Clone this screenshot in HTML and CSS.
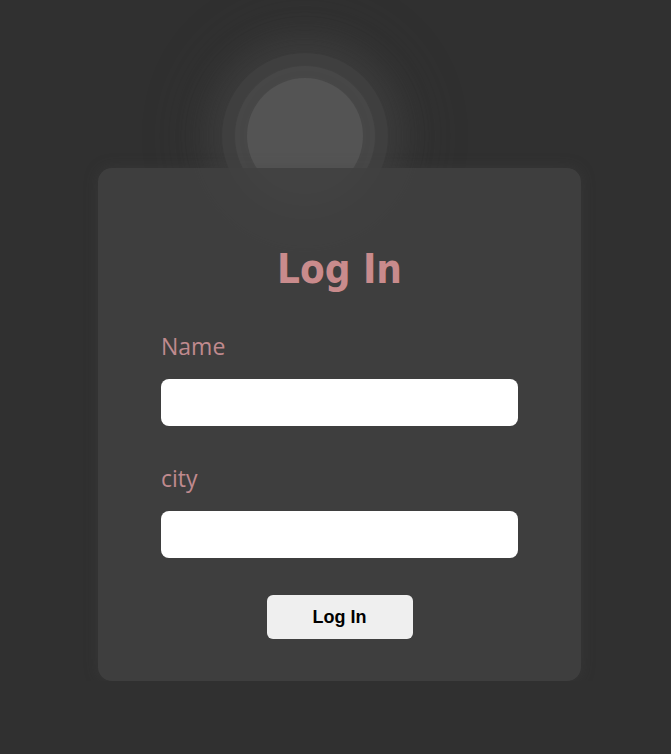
FILE: index.html
```html
<!DOCTYPE html>
<html lang="en">
<head>
<meta charset="utf-8">
<title>Log In</title>
<link rel="stylesheet" href="styles.css">
</head>
<body>
<main class="page">
  <section class="card">
    <div class="orb" aria-hidden="true"></div>
    <h1 class="title">Log In</h1>
    <form class="form">
      <div class="field">
        <label class="label" for="name">Name</label>
        <input class="input" id="name" type="text">
      </div>
      <div class="field">
        <label class="label" for="city">city</label>
        <input class="input" id="city" type="text">
      </div>
      <button class="btn" type="button">Log In</button>
    </form>
  </section>
</main>
</body>
</html>
```

FILE: styles.css
```css
html {
  background: #303030;
  height: 100%;
}

body {
  margin: 0;
  padding: 0;
}

.page {
  position: relative;
  z-index: 0;
  padding: 168px 0 0 98px;
}

.card {
  position: relative;
  width: 483px;
  height: 513px;
  box-sizing: border-box;
  padding: 77px 63px 0 63px;
  border-radius: 14px;
  background: rgba(64, 64, 64, 0.9);
  box-shadow: 0 0 14px rgba(70, 70, 70, 0.35);
  display: flex;
  flex-direction: column;
}

.orb {
  position: absolute;
  left: 149px;
  top: -90px;
  width: 116px;
  height: 116px;
  border-radius: 50%;
  background: #545454;
  box-shadow:
    0 0 0 12px rgba(78, 78, 78, 0.5),
    0 0 0 25px rgba(72, 72, 72, 0.45),
    0 0 30px 40px rgba(68, 68, 68, 0.45),
    0 0 50px 55px rgba(64, 64, 64, 0.3);
  z-index: -1;
}

.title {
  margin: 0;
  font-family: "DejaVu Sans Condensed", "DejaVu Sans", sans-serif;
  font-weight: bold;
  font-size: 40px;
  line-height: 48px;
  color: #c98b8c;
  text-align: center;
}

.form {
  display: flex;
  flex-direction: column;
  margin-top: 38px;
}

.field {
  display: flex;
  flex-direction: column;
  margin-bottom: 37px;
}

.label {
  font-family: "Open Sans", sans-serif;
  font-size: 23px;
  line-height: 30px;
  color: #c08a8e;
  margin-bottom: 18px;
}

.input {
  height: 47px;
  box-sizing: border-box;
  border: none;
  border-radius: 8px;
  background: #ffffff;
  outline: none;
}

.btn {
  align-self: center;
  width: 146px;
  height: 44px;
  border: none;
  border-radius: 6px;
  background: #efefef;
  color: #000;
  font-family: "Liberation Sans", Arial, sans-serif;
  font-weight: bold;
  font-size: 18px;
  cursor: pointer;
}
```
